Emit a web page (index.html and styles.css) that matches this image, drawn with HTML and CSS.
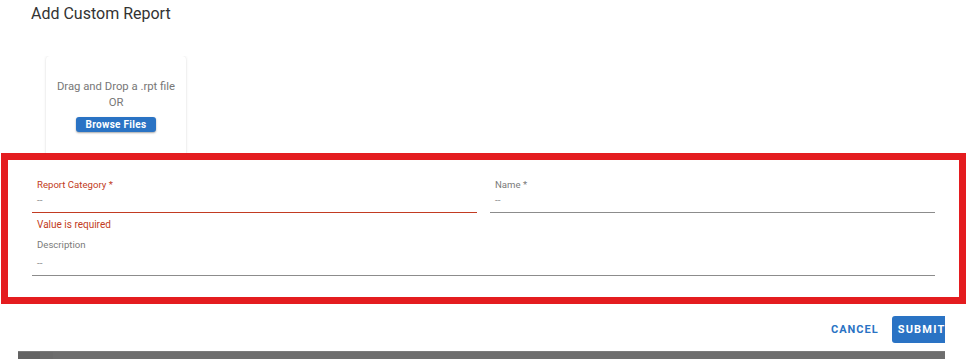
FILE: index.html
```html
<!DOCTYPE html>
<html>
<head>
<meta charset="utf-8">
<link rel="stylesheet" href="styles.css">
</head>
<body>
<div class="page">
  <h1 class="title">Add Custom Report</h1>
  <div class="upload-area">
    <div class="drop-card">
      <div class="drop-text">Drag and Drop a .rpt file</div>
      <div class="drop-text">OR</div>
      <button class="browse-btn">Browse Files</button>
    </div>
  </div>
  <section class="form-box">
    <div class="field">
      <div class="label label-error">Report Category *</div>
      <div class="input input-error"><span class="value">--</span></div>
      <div class="error-text">Value is required</div>
    </div>
    <div class="field">
      <div class="label">Name *</div>
      <div class="input"><span class="value">--</span></div>
    </div>
    <div class="field field-wide">
      <div class="label">Description</div>
      <div class="input input-tall"><span class="value">--</span></div>
    </div>
  </section>
  <div class="actions-wrap">
    <div class="actions">
      <button class="btn-cancel">CANCEL</button>
      <button class="btn-submit">SUBMIT</button>
    </div>
  </div>
  <div class="scrollbar"></div>
</div>
</body>
</html>
```
FILE: styles.css
```css
* { box-sizing: border-box; }
html, body { margin: 0; padding: 0; background: #fff; }
body {
  font-family: Roboto, "Liberation Sans", Arial, sans-serif;
  color: #333;
  overflow: hidden;
}
.page { width: 966px; }
.title {
  margin: 0;
  padding: 4px 0 0 31px;
  font-size: 16px;
  line-height: 20px;
  font-weight: 400;
  color: #333;
}
.upload-area {
  padding-left: 46px;
  margin-top: 32px;
  height: 97px;
  overflow: hidden;
}
.drop-card {
  width: 140px;
  height: 130px;
  border-radius: 4px;
  background: #fff;
  box-shadow: 0 0 3px rgba(0,0,0,0.12), 0 1px 2px rgba(0,0,0,0.06);
  display: flex;
  flex-direction: column;
  align-items: center;
  padding-top: 23px;
}
.drop-text {
  font-size: 11.3px;
  line-height: 16px;
  color: #777;
}
.browse-btn {
  margin-top: 6px;
  width: 80px;
  height: 15px;
  padding: 0;
  border: none;
  border-radius: 3px;
  background: #2a73c4;
  color: #fff;
  font-family: Roboto, "Liberation Sans", Arial, sans-serif;
  font-weight: 700;
  font-size: 10px;
  line-height: 15px;
  letter-spacing: 0.3px;
  box-shadow: 0 1px 2px rgba(0,0,0,0.35);
}
.form-box {
  margin-left: 1px;
  width: 965px;
  height: 151px;
  border: 7px solid #e41c1f;
  padding: 19px 24px 0 24px;
  display: grid;
  grid-template-columns: 445px 445px;
  column-gap: 13px;
  align-items: start;
  align-content: start;
  background: #fff;
}
.field-wide { grid-column: 1 / 3; grid-row: 2; margin-top: 8px; }
.label {
  font-size: 9.6px;
  line-height: 12px;
  height: 12px;
  padding-left: 5px;
  color: #7a7a7a;
}
.label-error { color: #c23b22; }
.input {
  height: 22px;
  padding: 4px 0 0 5px;
  border-bottom: 1px solid #8c8c8c;
}
.input-error { border-bottom-color: #c23b22; }
.input-tall { height: 25px; padding-top: 7px; }
.value {
  display: block;
  font-size: 10px;
  line-height: 12px;
  color: #999;
}
.error-text {
  margin-top: 6px;
  padding-left: 5px;
  font-size: 10px;
  line-height: 12px;
  color: #c23b22;
}
.actions-wrap {
  width: 945px;
  overflow: hidden;
  margin-top: 12px;
}
.actions {
  display: flex;
  align-items: center;
  padding-left: 823px;
  gap: 5px;
  width: 1000px;
}
.btn-cancel {
  background: none;
  border: none;
  padding: 0 8px;
  height: 27px;
  font-family: Roboto, "Liberation Sans", Arial, sans-serif;
  font-weight: 700;
  font-size: 11px;
  letter-spacing: 1px;
  color: #2a73c4;
}
.btn-submit {
  background: #2a73c4;
  border: none;
  border-radius: 3px;
  padding: 0 6px;
  height: 27px;
  flex-shrink: 0;
  font-family: Roboto, "Liberation Sans", Arial, sans-serif;
  font-weight: 700;
  font-size: 11px;
  letter-spacing: 1.2px;
  color: #fff;
}
.scrollbar {
  margin: 8px 0 0 18px;
  width: 927px;
  height: 8px;
  background: linear-gradient(to right, #626262 0 22px, #6b6b6b 22px 35px, #6e6e6e 35px);
  border-top: 1px solid #7a7a7a;
}
```
